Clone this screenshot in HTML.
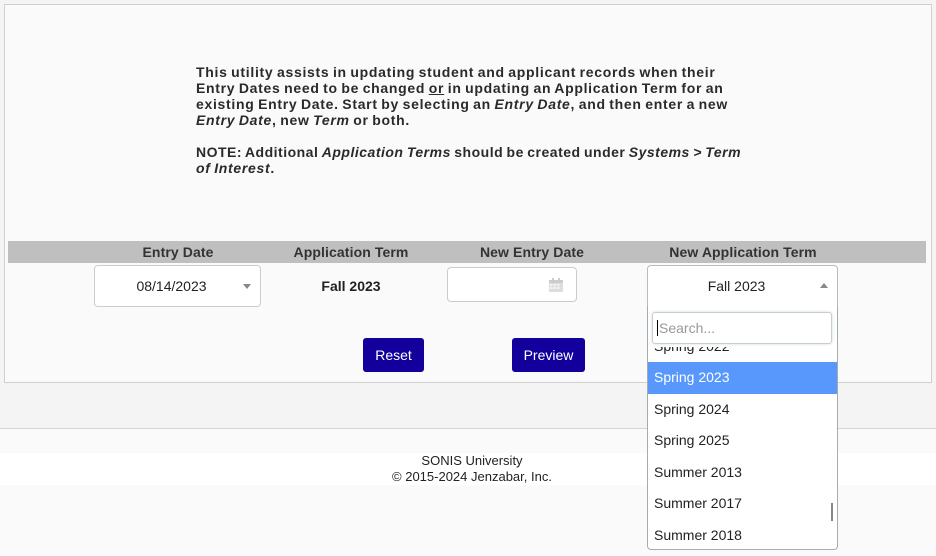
<!DOCTYPE html>
<html><head><meta charset="utf-8"><style>
*{box-sizing:border-box;margin:0;padding:0}
body{width:936px;height:556px;background:#f4f4f4;font-family:"Liberation Sans",Arial,sans-serif;position:relative;overflow:hidden;color:#222}
.a{position:absolute}
#panel{left:4px;top:4px;width:928px;height:379px;background:#fafafa;border:1px solid #d0d0d0}
#txt{left:196px;top:64px;width:548px;font-size:14px;font-weight:bold;line-height:16px;color:#2a2a2a;letter-spacing:0.7px;word-spacing:-1px}
#bar{left:8px;top:241px;width:918px;height:22px;background:#bfbfbf}
.h{top:244px;font-size:14px;font-weight:bold;color:#333;text-align:center;width:200px;letter-spacing:0.1px}
.sel{background:#fff;border:1px solid #ccc;border-radius:4px;font-size:14px;color:#222;text-align:center}
.btn{background:#13009c;color:#fff;font-size:14px;border-radius:3px;text-align:center;line-height:35px}
.it{left:654px;font-size:14px;color:#222}
</style></head><body>
<div class="a" id="panel"></div>
<div class="a" id="txt">This utility assists in updating student and applicant records when their Entry Dates need to be changed <u>or</u> in updating an Application Term for an existing Entry Date. Start by selecting an <i>Entry Date</i>, and then enter a new <i>Entry Date</i>, new <i>Term</i> or both.<br><br><span style="white-space:nowrap;letter-spacing:0.5px">NOTE: Additional <i>Application Terms</i> should be created under <i>Systems &gt; Term</i></span><br><i>of Interest</i>.</div>
<div class="a" id="bar"></div>
<div class="a h" style="left:78px">Entry Date</div>
<div class="a h" style="left:251px">Application Term</div>
<div class="a h" style="left:432px">New Entry Date</div>
<div class="a h" style="left:643px">New Application Term</div>

<div class="a sel" style="left:94px;top:265px;width:167px;height:42px;line-height:40px;padding-right:12px">08/14/2023</div>
<div class="a" style="left:243px;top:284px;border-left:4px solid transparent;border-right:4px solid transparent;border-top:5px solid #888"></div>
<div class="a" style="left:251px;top:278px;width:200px;text-align:center;font-size:14px;font-weight:bold;color:#222">Fall 2023</div>

<div class="a sel" style="left:447px;top:267px;width:130px;height:35px"></div>
<svg class="a" style="left:549px;top:278px" width="14" height="14" viewBox="0 0 14 14"><rect x="0" y="2" width="14" height="12" fill="#ddd"/><rect x="0" y="2" width="14" height="3" fill="#ccc"/><rect x="3" y="0" width="2" height="3" fill="#ccc"/><rect x="9" y="0" width="2" height="3" fill="#ccc"/><g fill="#f4f4f4"><rect x="1" y="6" width="2.5" height="2"/><rect x="4.5" y="6" width="2.5" height="2"/><rect x="8" y="6" width="2.5" height="2"/><rect x="1" y="9" width="2.5" height="2"/><rect x="4.5" y="9" width="2.5" height="2"/><rect x="8" y="9" width="2.5" height="2"/></g></svg>

<div class="a sel" style="left:647px;top:265px;width:191px;height:42px;line-height:40px;border-radius:4px 4px 0 0;border-color:#bbb;padding-right:12px">Fall 2023</div>
<div class="a" style="left:820px;top:283px;border-left:4px solid transparent;border-right:4px solid transparent;border-bottom:5px solid #888"></div>

<div class="a btn" style="left:363px;top:338px;width:61px;height:34px">Reset</div>
<div class="a btn" style="left:512px;top:338px;width:73px;height:34px">Preview</div>

<div class="a" style="left:0;top:428px;width:936px;height:128px;background:#fafafa;border-top:1px solid #d5d5d5"></div>
<div class="a" style="left:0;top:453px;width:936px;height:32px;background:#fff;text-align:center;font-size:13px;line-height:16px;color:#222;padding-left:8px"><div>SONIS University</div><div>© 2015-2024 Jenzabar, Inc.</div></div>

<div class="a" style="left:647px;top:306px;width:191px;height:244px;background:#fff;border:1px solid #aaa;border-top:none;border-radius:0 0 4px 4px;overflow:hidden">
 <div class="a" style="left:6px;top:32px;font-size:14px;color:#222;line-height:16px">Spring 2022</div>
 <div class="a" style="left:0;top:0;width:189px;height:41px;background:#fff"></div>
 <div class="a" style="left:4px;top:6px;width:180px;height:32px;border:1px solid #ccc;border-radius:3px;box-shadow:0 0 3px #cde;font-size:14px;color:#999;line-height:30px;padding-left:4px"><span style="border-left:1px solid #000;padding-left:1px">Search...</span></div>
 <div class="a" style="left:0;top:56px;width:189px;height:32px;background:#5897fb;color:#fff;font-size:14px;line-height:30px;padding-left:6px">Spring 2023</div>
 <div class="a" style="left:183px;top:197px;width:2px;height:18px;background:#888"></div>
</div>
<div class="a it" style="top:401px">Spring 2024</div>
<div class="a it" style="top:432px">Spring 2025</div>
<div class="a it" style="top:464px">Summer 2013</div>
<div class="a it" style="top:495px">Summer 2017</div>
<div class="a it" style="top:527px">Summer 2018</div>
</body></html>
